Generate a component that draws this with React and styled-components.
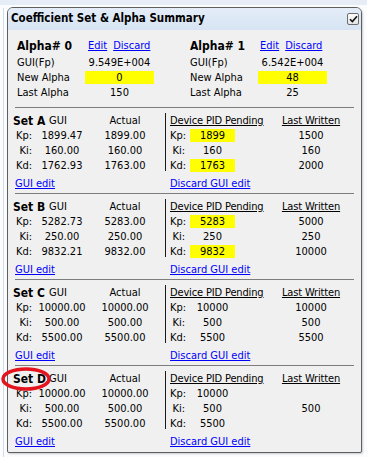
import React from 'react';
import styled, { createGlobalStyle } from 'styled-components';

const GlobalStyle = createGlobalStyle`
  html, body {
    margin: 0;
    padding: 0;
  }
  body {
    font-family: "DejaVu Sans Condensed", "Liberation Sans", Arial, sans-serif;
    font-size: 11px;
    color: #000;
    background: #fbfcfe;
    white-space: nowrap;
  }
`;

const Page = styled.div`
  width: 367px;
  height: 457px;
  box-sizing: border-box;
  padding: 7px 0 0 7px;
  background:
    linear-gradient(#e6edf6, #e6edf6) 0 0 / 100% 5px no-repeat,
    linear-gradient(#d3dbe6, #d3dbe6) 3px 8px / 1px 100% no-repeat,
    #fbfcfe;
`;

const Panel = styled.div`
  position: relative;
  width: 355px;
  height: 446px;
  box-sizing: border-box;
  border: 1px solid #5f5f5f;
  border-radius: 6px 6px 2px 2px;
  background: #f0f0f0;
  box-shadow: 1px 1px 2px rgba(0, 0, 0, 0.2);
`;

const TitleBar = styled.div`
  height: 22px;
  box-sizing: border-box;
  display: flex;
  align-items: center;
  justify-content: space-between;
  padding: 0 2px 3px 3px;
  background: linear-gradient(#e4edf8, #d7e4f3);
  border-radius: 5px 5px 0 0;
  font-size: 11.5px;
  font-weight: bold;
`;

const CheckBox = styled.span`
  width: 12px;
  height: 12px;
  box-sizing: border-box;
  border: 1px solid #6e6e6e;
  border-radius: 2px;
  background: linear-gradient(#fdfdfd, #e4e4e4);
  display: flex;
  align-items: center;
  justify-content: center;
  margin-top: 2px;
`;

const AlphaArea = styled.div`
  display: flex;
  gap: 36px;
  padding: 8px 0 7px 9px;
`;

const AlphaBlock = styled.div`
  display: grid;
  grid-template-columns: 68px 69px;
  grid-template-rows: 17px repeat(3, 15px);
  align-items: center;
`;

const AlphaHead = styled.div`
  grid-column: 1 / -1;
  display: flex;
  align-items: center;
  gap: 6px;
  height: 15px;
  align-self: start;
`;

const BoldName = styled.span`
  font-size: 12px;
  font-weight: bold;
  width: ${p => p.$w || 'auto'};
  flex: none;
`;

const Link = styled.a`
  color: #0000ff;
  text-decoration: underline;
  cursor: pointer;
`;

const Value = styled.span`
  display: block;
  text-align: center;
  height: 13px;
  line-height: 13px;
  width: ${p => p.$w || 'auto'};
  background: ${p => (p.$hl ? '#ffff00' : 'transparent')};
`;

const Rule = styled.hr`
  margin: 0 7px;
  border: none;
  border-top: 1px solid #7d7d7d;
  height: 0;
`;

const SetBlock = styled.section`
  padding: 5px 0 2px 5px;
`;

const TopRow = styled.div`
  display: flex;
`;

const LeftGrid = styled.div`
  display: grid;
  grid-template-columns: 20px 58px 68px;
  grid-auto-rows: 15px;
  align-items: center;
  margin-right: 6px;
`;

const RightGrid = styled.div`
  display: grid;
  grid-template-columns: 20px 92px 58px;
  grid-auto-rows: 15px;
  align-items: center;
  border-left: 1px solid #1a1a1a;
  padding-left: 4px;
  height: 58px;
`;

const SetTitle = styled.div`
  position: relative;
  grid-column: 1 / 3;
  display: flex;
  align-items: center;
`;

const Label = styled.span`
  text-align: right;
  padding-right: ${p => p.$pad || 1}px;
`;

const Centered = styled.span`
  text-align: center;
`;

const Underlined = styled.span`
  text-decoration: underline;
  grid-column: ${p => p.$span || 'auto'};
  text-align: ${p => p.$align || 'left'};
  justify-self: ${p => (p.$align === 'center' ? 'center' : 'start')};
  letter-spacing: -0.15px;
`;

const LinkRow = styled.div`
  display: grid;
  grid-template-columns: 155px auto;
  height: 15px;
  align-items: center;
  margin-top: 3px;
  padding-left: 2px;
`;

const Circle = styled.svg`
  position: absolute;
  left: -12px;
  top: -5px;
  pointer-events: none;
  z-index: 2;
`;

const alphas = [
  { id: 0, gui: '9.549E+004', next: '0', last: '150', w: '65px' },
  { id: 1, gui: '6.542E+004', next: '48', last: '25', w: '64px' },
];

const sets = [
  {
    name: 'A',
    rows: [
      ['Kp:', '1899.47', '1899.00', '1899', true, '1500'],
      ['Ki:', '160.00', '160.00', '160', false, '160'],
      ['Kd:', '1762.93', '1763.00', '1763', true, '2000'],
    ],
  },
  {
    name: 'B',
    rows: [
      ['Kp:', '5282.73', '5283.00', '5283', true, '5000'],
      ['Ki:', '250.00', '250.00', '250', false, '250'],
      ['Kd:', '9832.21', '9832.00', '9832', true, '10000'],
    ],
  },
  {
    name: 'C',
    rows: [
      ['Kp:', '10000.00', '10000.00', '10000', false, '10000'],
      ['Ki:', '500.00', '500.00', '500', false, '500'],
      ['Kd:', '5500.00', '5500.00', '5500', false, '5500'],
    ],
  },
  {
    name: 'D',
    circled: true,
    rows: [
      ['Kp:', '10000.00', '10000.00', '10000', false, ''],
      ['Ki:', '500.00', '500.00', '500', false, '500'],
      ['Kd:', '5500.00', '5500.00', '5500', false, ''],
    ],
  },
];

const CoefficientSet = ({ set }) => (
  <SetBlock>
    <TopRow>
      <LeftGrid>
        <SetTitle>
          <BoldName $w="36px">Set {set.name}</BoldName>
          <span>GUI</span>
          {set.circled && (
            <Circle width="50" height="24" viewBox="0 0 50 24">
              <ellipse cx="25" cy="12" rx="23" ry="10" fill="none" stroke="#e3141d" strokeWidth="3.5" />
            </Circle>
          )}
        </SetTitle>
        <Centered>Actual</Centered>
        {set.rows.map(r => (
          <React.Fragment key={r[0]}>
            <Label>{r[0]}</Label>
            <Centered>{r[1]}</Centered>
            <Centered>{r[2]}</Centered>
          </React.Fragment>
        ))}
      </LeftGrid>
      <RightGrid>
        <Underlined $span="1 / 3">Device PID Pending</Underlined>
        <Underlined $align="center">Last Written</Underlined>
        {set.rows.map(r => (
          <React.Fragment key={r[0]}>
            <Label $pad={5}>{r[0]}</Label>
            <Value $w="45px" $hl={r[4]}>{r[3]}</Value>
            <Centered>{r[5]}</Centered>
          </React.Fragment>
        ))}
      </RightGrid>
    </TopRow>
    <LinkRow>
      <span><Link>GUI edit</Link></span>
      <span><Link>Discard GUI edit</Link></span>
    </LinkRow>
  </SetBlock>
);

const App = () => (
  <Page>
    <GlobalStyle />
    <Panel>
      <TitleBar>
        <span>Coefficient Set &amp; Alpha Summary</span>
        <CheckBox>
          <svg width="9" height="8" viewBox="0 0 9 8">
            <path d="M1 4.2 L3.4 6.6 L8 1.2" fill="none" stroke="#111" strokeWidth="1.6" />
          </svg>
        </CheckBox>
      </TitleBar>
      <AlphaArea>
        {alphas.map(a => (
          <AlphaBlock key={a.id}>
            <AlphaHead>
              <BoldName $w={a.w}>Alpha# {a.id}</BoldName>
              <Link>Edit</Link>
              <Link>Discard</Link>
            </AlphaHead>
            <span>GUI(Fp)</span>
            <Value>{a.gui}</Value>
            <span>New Alpha</span>
            <Value $hl>{a.next}</Value>
            <span>Last Alpha</span>
            <Value>{a.last}</Value>
          </AlphaBlock>
        ))}
      </AlphaArea>
      {sets.map(s => (
        <React.Fragment key={s.name}>
          <Rule />
          <CoefficientSet set={s} />
        </React.Fragment>
      ))}
    </Panel>
  </Page>
);

export default App;
